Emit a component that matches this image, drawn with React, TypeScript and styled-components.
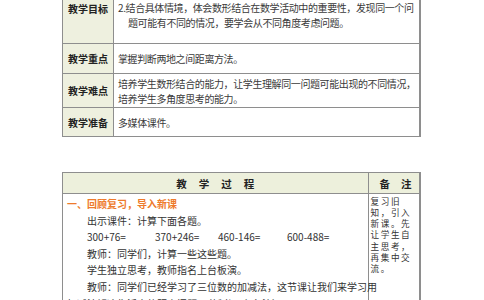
import React from "react";
import styled, { createGlobalStyle } from "styled-components";

const Global = createGlobalStyle`
  html, body { margin: 0; padding: 0; background: #ffffff; }
  body { font-family: "Noto Sans CJK SC", "Noto Sans", sans-serif; color: #333; }
  td, th { box-sizing: border-box; }
`;

const Page = styled.div`
  margin-top: -28px;
  padding-left: 62px;
  display: flex;
  flex-direction: column;
  gap: 35px;
`;

const Table = styled.table`
  border-collapse: collapse;
  width: 359px;
  table-layout: fixed;
  border: 1px solid #8e8e8e;
  border-right-width: 2px;
`;

const Row = styled.tr<{ $h: number }>`
  height: ${(p) => p.$h}px;
`;

const LabelCell = styled.td`
  width: 51px;
  background: #eef0df;
  border: 1px solid #8e8e8e;
  text-align: center;
  vertical-align: middle;
  font-size: 10px;
  font-weight: 700;
  color: #222;
  padding: 0;
  white-space: nowrap;
`;

const ContentCell = styled.td<{ $align?: string; $pb?: number }>`
  border: 1px solid #8e8e8e;
  vertical-align: ${(p) => p.$align || "middle"};
  padding: 0 0 ${(p) => p.$pb || 0}px 4px;
  font-size: 10px;
  letter-spacing: -0.4px;
  line-height: 15px;
  color: #3a3a3a;
  white-space: nowrap;
`;

const Line = styled.div<{ $indent?: number }>`
  padding-left: ${(p) => p.$indent || 0}px;
`;

const HeaderCell = styled.th<{ $ls: number; $w?: number }>`
  ${(p) => (p.$w ? `width: ${p.$w}px;` : "")}
  background: #edf0dc;
  border: 1px solid #8e8e8e;
  height: 21px;
  padding: 0 0 0 ${(p) => p.$ls}px;
  font-size: 10.5px;
  font-weight: 700;
  color: #222;
  letter-spacing: ${(p) => p.$ls}px;
  text-align: center;
  vertical-align: middle;
  white-space: nowrap;
`;

const ProcessCell = styled.td`
  border: 1px solid #8e8e8e;
  vertical-align: top;
  padding: 2px 0 0 4px;
  font-size: 10px;
  line-height: 16.6px;
  color: #333;
  white-space: nowrap;
`;

const NoteCell = styled.td`
  border: 1px solid #8e8e8e;
  vertical-align: top;
  padding: 1.5px 0 0 2px;
  font-size: 8.6px;
  line-height: 11.3px;
  letter-spacing: 1.6px;
  color: #333;
  white-space: nowrap;
`;

const SectionTitle = styled.div`
  color: #ee7b2c;
  font-weight: 700;
`;

const Para = styled.div<{ $indent?: boolean }>`
  padding-left: ${(p) => (p.$indent === false ? 0 : 20)}px;
`;

const Sums = styled.div`
  display: grid;
  grid-template-columns: 68px 63px 69px auto;
  padding-left: 20px;
`;

const sums = ["300+76=", "370+246=", "460-146=", "600-488="];
const notes = ["复习旧", "知，引入", "新课。先", "让学生自", "主思考，", "再集中交", "流。"];

export default function App() {
  return (
    <>
      <Global />
      <Page>
        <Table>
          <tbody>
            <Row $h={71}>
              <LabelCell>教学目标</LabelCell>
              <ContentCell $align="bottom" $pb={13}>
                <Line>2.结合具体情境，体会数形结合在数学活动中的重要性，发现同一个问</Line>
                <Line $indent={10}>题可能有不同的情况，要学会从不同角度考虑问题。</Line>
              </ContentCell>
            </Row>
            <Row $h={30}>
              <LabelCell>教学重点</LabelCell>
              <ContentCell>掌握判断两地之间距离方法。</ContentCell>
            </Row>
            <Row $h={34}>
              <LabelCell>教学难点</LabelCell>
              <ContentCell>
                <Line>培养学生数形结合的能力，让学生理解同一问题可能出现的不同情况，</Line>
                <Line>培养学生多角度思考的能力。</Line>
              </ContentCell>
            </Row>
            <Row $h={29}>
              <LabelCell>教学准备</LabelCell>
              <ContentCell>多媒体课件。</ContentCell>
            </Row>
          </tbody>
        </Table>

        <Table>
          <thead>
            <tr>
              <HeaderCell $ls={12}>教学过程</HeaderCell>
              <HeaderCell $ls={11} $w={52}>
                备注
              </HeaderCell>
            </tr>
          </thead>
          <tbody>
            <tr>
              <ProcessCell>
                <SectionTitle>一、回顾复习，导入新课</SectionTitle>
                <Para>出示课件：计算下面各题。</Para>
                <Sums>
                  {sums.map((s) => (
                    <span key={s}>{s}</span>
                  ))}
                </Sums>
                <Para>教师：同学们，计算一些这些题。</Para>
                <Para>学生独立思考，教师指名上台板演。</Para>
                <Para>教师：同学们已经学习了三位数的加减法，这节课让我们来学习用</Para>
                <Para $indent={false}>加减法解决生活中的距离问题。（板书：有备注）</Para>
              </ProcessCell>
              <NoteCell>
                {notes.map((n) => (
                  <div key={n}>{n}</div>
                ))}
              </NoteCell>
            </tr>
          </tbody>
        </Table>
      </Page>
    </>
  );
}
